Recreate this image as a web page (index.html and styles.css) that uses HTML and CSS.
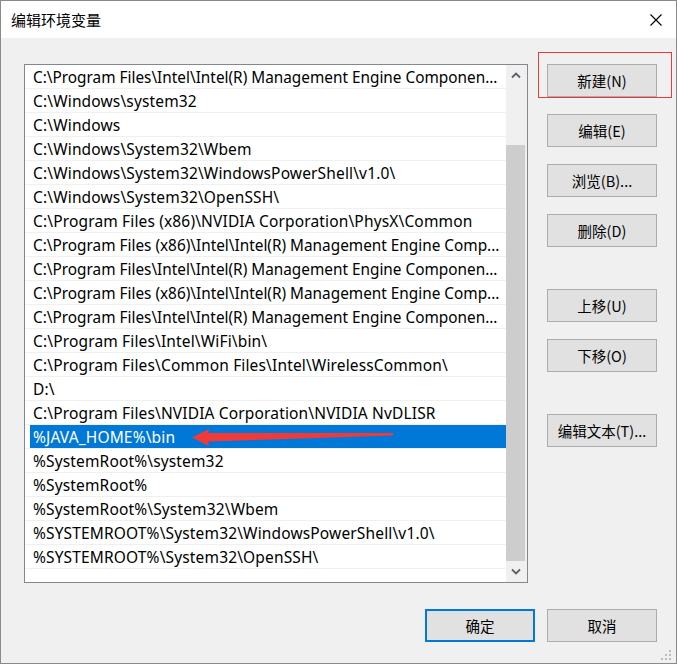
FILE: index.html
```html
<!DOCTYPE html>
<html lang="zh-CN">
<head>
    <meta charset="UTF-8">
    <meta name="viewport" content="width=device-width, initial-scale=1.0">
    <title>编辑环境变量</title>
    <link rel="stylesheet" href="styles.css">
</head>
<body>
    <div class="window">
        <div class="titlebar">
            <span class="title">编辑环境变量</span>
            <svg class="close" width="12" height="12" viewBox="0 0 12 12">
                <path d="M0.5 0.5 L11.5 11.5 M11.5 0.5 L0.5 11.5" stroke="#000" stroke-width="1.1" fill="none"/>
            </svg>
        </div>
        <div class="main">
            <div class="content">
                <div class="listbox">
                    <ul class="items">
                        <li class="cut"><span>C:\Program Files\Intel\Intel(R) Management Engine Componen...</span></li>
                        <li><span>C:\Windows\system32</span></li>
                        <li><span>C:\Windows</span></li>
                        <li><span>C:\Windows\System32\Wbem</span></li>
                        <li><span>C:\Windows\System32\WindowsPowerShell\v1.0\</span></li>
                        <li><span>C:\Windows\System32\OpenSSH\</span></li>
                        <li><span>C:\Program Files (x86)\NVIDIA Corporation\PhysX\Common</span></li>
                        <li class="cut"><span>C:\Program Files (x86)\Intel\Intel(R) Management Engine Comp...</span></li>
                        <li class="cut"><span>C:\Program Files\Intel\Intel(R) Management Engine Componen...</span></li>
                        <li class="cut"><span>C:\Program Files (x86)\Intel\Intel(R) Management Engine Comp...</span></li>
                        <li class="cut"><span>C:\Program Files\Intel\Intel(R) Management Engine Componen...</span></li>
                        <li><span>C:\Program Files\Intel\WiFi\bin\</span></li>
                        <li><span>C:\Program Files\Common Files\Intel\WirelessCommon\</span></li>
                        <li><span>D:\</span></li>
                        <li><span>C:\Program Files\NVIDIA Corporation\NVIDIA NvDLISR</span></li>
                        <li class="selected"><span>%JAVA_HOME%\bin</span></li>
                        <li><span>%SystemRoot%\system32</span></li>
                        <li><span>%SystemRoot%</span></li>
                        <li><span>%SystemRoot%\System32\Wbem</span></li>
                        <li><span>%SYSTEMROOT%\System32\WindowsPowerShell\v1.0\</span></li>
                        <li><span>%SYSTEMROOT%\System32\OpenSSH\</span></li>
                    </ul>
                    <div class="scrollbar">
                        <div class="arrow">
                            <svg width="10" height="7" viewBox="0 0 10 7">
                                <polyline points="1,5.5 5,1.5 9,5.5" stroke="#606060" stroke-width="1.8" fill="none"/>
                            </svg>
                        </div>
                        <div class="track"><div class="thumb"></div></div>
                        <div class="arrow">
                            <svg width="10" height="7" viewBox="0 0 10 7">
                                <polyline points="1,1.5 5,5.5 9,1.5" stroke="#606060" stroke-width="1.8" fill="none"/>
                            </svg>
                        </div>
                    </div>
                </div>
                <div class="side">
                    <div class="group">
                        <button class="btn">新建(N)</button>
                        <button class="btn">编辑(E)</button>
                        <button class="btn">浏览(B)...</button>
                        <button class="btn">删除(D)</button>
                    </div>
                    <div class="group">
                        <button class="btn">上移(U)</button>
                        <button class="btn">下移(O)</button>
                    </div>
                    <div class="group">
                        <button class="btn">编辑文本(T)...</button>
                    </div>
                </div>
            </div>
            <div class="footer">
                <button class="btn default">确定</button>
                <button class="btn">取消</button>
            </div>
        </div>

        <svg class="grip" width="12" height="12" viewBox="0 0 12 12">
            <rect x="8" y="0" width="2" height="2"/>
            <rect x="4" y="4" width="2" height="2"/>
            <rect x="8" y="4" width="2" height="2"/>
            <rect x="0" y="8" width="2" height="2"/>
            <rect x="4" y="8" width="2" height="2"/>
            <rect x="8" y="8" width="2" height="2"/>
        </svg>

        <!-- annotations drawn over the dialog -->
        <div class="mark"></div>
        <svg class="pointer" width="677" height="664" viewBox="0 0 677 664">
            <polygon points="192,437.5 209,429 208,433 393,433 393,435.5 208,441.5 209,446" fill="#f03a3a"/>
        </svg>
    </div>
</body>
</html>
```

FILE: styles.css
```css
body {
    margin: 0;
    font-family: "Noto Sans", "Noto Sans CJK SC", sans-serif;
}

.window {
    position: relative;
    width: 677px;
    height: 664px;
    box-sizing: border-box;
    border: 1px solid #8a8a8a;
    background: #f0f0f0;
    overflow: hidden;
}

.titlebar {
    height: 37px;
    background: #fff;
    display: flex;
    align-items: center;
    justify-content: space-between;
    padding: 0 14px 0 10px;
}

.title {
    font-family: "Noto Sans CJK SC", sans-serif;
    font-size: 15px;
    color: #000;
}

.main {
    display: flex;
    flex-direction: column;
    padding: 26px 19px 0 23px;
}

.content {
    display: flex;
    gap: 19px;
}

.listbox {
    width: 504px;
    height: 519px;
    box-sizing: border-box;
    border: 1px solid #828790;
    background: #fff;
    display: flex;
}

.items {
    list-style: none;
    margin: 0;
    padding: 0;
    flex: 1;
    min-width: 0;
}

.items li {
    height: 23px;
    border-bottom: 1px solid #f0f0f0;
    padding-left: 5px;
    display: flex;
}

.items span {
    flex: 1;
    padding-left: 3px;
    line-height: 24px;
    font-size: 15.5px;
    letter-spacing: 0.15px;
    color: #000;
    white-space: nowrap;
    overflow: hidden;
}

/* rows Windows already shortened with "..." */
.items li.cut span {
    letter-spacing: 0;
    font-size: 15.35px;
}

.items li.selected span {
    background: #0078d7;
    color: #fff;
}

.scrollbar {
    width: 21px;
    background: #f0f0f0;
    display: flex;
    flex-direction: column;
}

.arrow {
    height: 21px;
    display: flex;
    align-items: center;
    justify-content: center;
    padding-right: 1px;
}

.track {
    flex: 1;
}

.thumb {
    width: 19px;
    height: 416px;
    margin-top: 59px;
    background: #cdcdcd;
}

.side {
    display: flex;
    flex-direction: column;
    gap: 42px;
}

.group {
    display: flex;
    flex-direction: column;
    gap: 17px;
}

.btn {
    width: 110px;
    height: 33px;
    box-sizing: border-box;
    padding: 0;
    border: 1px solid #adadad;
    background: #e1e1e1;
    font-family: "Noto Sans CJK SC", sans-serif;
    font-size: 14.5px;
    color: #000;
}

.btn.default {
    border: 2px solid #0078d7;
}

.footer {
    display: flex;
    justify-content: flex-end;
    gap: 12px;
    margin-top: 26px;
}

.grip {
    position: absolute;
    right: 3px;
    bottom: 1px;
    fill: #bcbcbc;
}

.mark {
    position: absolute;
    left: 537px;
    top: 51px;
    width: 134px;
    height: 46px;
    box-sizing: border-box;
    border: 1px solid #e8393c;
}

.pointer {
    position: absolute;
    left: -1px;
    top: -1px;
    pointer-events: none;
}
```
